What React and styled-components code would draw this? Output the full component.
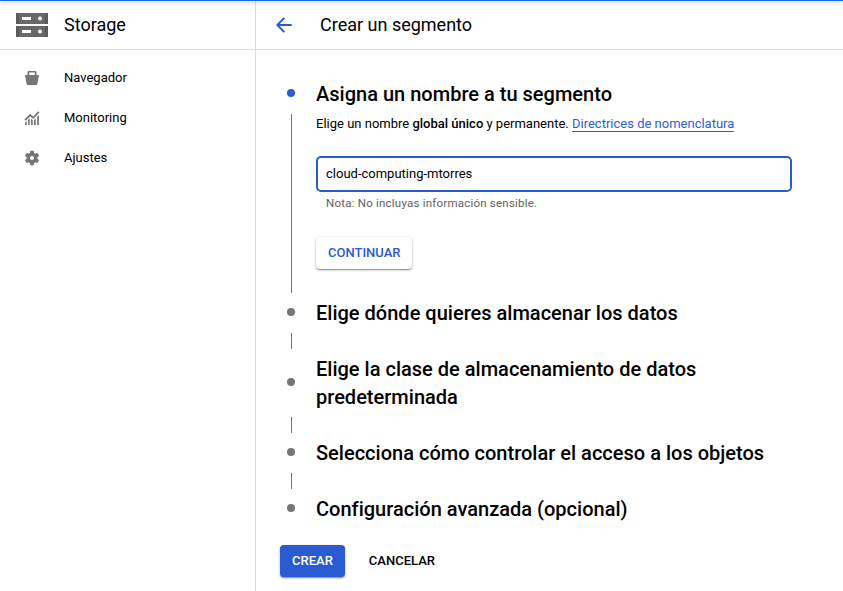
import React from "react";
import styled, { createGlobalStyle } from "styled-components";

const GlobalStyle = createGlobalStyle`
  *, *::before, *::after { box-sizing: border-box; }
  body { margin: 0; background: #fff; overflow: hidden; }
  button, input { font: inherit; letter-spacing: inherit; }
`;

const Page = styled.div`
  display: flex;
  flex-direction: column;
  height: 591px;
  color: #000;
  background: #fff;
  font: 400 13px/20px Roboto, "Liberation Sans", sans-serif;
`;

const TopBar = styled.div`
  position: relative;
  flex: none;
  height: 1px;
  background: #1a66e0;
  box-shadow: 0 1px 4px rgba(0, 0, 0, 0.5);
`;

const Columns = styled.div`
  flex: 1;
  display: grid;
  grid-template-columns: 256px 1fr;
`;

const Sidebar = styled.aside`
  border-right: 1px solid #dcdcdc;
`;

const Header = styled.header`
  display: flex;
  align-items: center;
  height: 49px;
  padding-left: ${(p) => p.$inset}px;
  gap: ${(p) => p.$gap}px;
  border-bottom: 1px solid #dcdcdc;
`;

const HeaderTitle = styled.h1`
  margin: 0;
  font-size: 18px;
  font-weight: 400;
  line-height: 24px;
`;

const Nav = styled.nav`
  padding-top: 8px;
`;

const NavItem = styled.a`
  display: flex;
  align-items: center;
  height: 40px;
  padding-left: 23px;
  gap: 23px;

  svg { flex: none; }
`;

const Content = styled.main`
  padding: 30px 51px 0 24px;
`;

const Step = styled.section`
  display: grid;
  grid-template-columns: 22px 1fr;
  column-gap: 14px;
`;

const Dot = styled.span`
  align-self: center;
  justify-self: center;
  width: 8px;
  height: 8px;
  margin-bottom: 2px;
  border-radius: 50%;
  background: ${(p) => (p.$active ? "#2a5bd3" : "#757575")};
`;

const StepTitle = styled.h2`
  margin: 0;
  font-size: 20px;
  font-weight: 500;
  line-height: 28px;
  letter-spacing: 0.01px;
`;

const Connector = styled.span`
  justify-self: center;
  width: 1px;
  min-height: 16px;
  margin: 6px 0 6px 1px;
  background: #757575;
`;

const StepBody = styled.div`
  height: 191px;
  padding-top: 6px;
`;

const Description = styled.p`
  margin: 0 0 22px;
  line-height: 20px;

  strong { font-weight: 500; }
`;

const Link = styled.a`
  color: #3160d4;
  border-bottom: 1px solid #3160d4;
`;

const NameInput = styled.input`
  display: block;
  width: 476px;
  height: 36px;
  padding: 0 8px 2px;
  border: 2px solid #2a5bd3;
  border-radius: 5px;
  outline: none;
  color: #000;
  background: #fff;
`;

const Hint = styled.p`
  margin: 3px 0 26px 10px;
  color: #616161;
  font-size: 11.5px;
  line-height: 16px;
  letter-spacing: 0.22px;
`;

const Button = styled.button`
  height: 32px;
  padding: 0 12px;
  border: 0;
  border-radius: 4px;
  font-weight: 500;
  color: ${(p) => (p.$kind === "primary" ? "#fff" : p.$kind === "raised" ? "#2a5bd3" : "#000")};
  background: ${(p) => (p.$kind === "primary" ? "#2a5bd3" : "#fff")};
  box-shadow: ${(p) =>
    p.$kind === "text" ? "none" : "0 1px 3px rgba(0, 0, 0, 0.25), 0 1px 1px rgba(0, 0, 0, 0.3)"};
`;

const Actions = styled.div`
  display: flex;
  gap: 12px;
  margin-top: 22px;
`;

const StorageLogo = () => (
  <svg width="32" height="26" viewBox="0 0 32 26">
    <path fill="#686868" d="M0 1h32v11H0zM0 14h32v11H0z" />
    <path fill="#5a5a5a" d="M0 1h3v11H0zM29 1h3v11h-3zM0 14h3v11H0zM29 14h3v11h-3z" />
    <path fill="#fff" d="M6 5h9v3H6zM6 18h9v3H6z" />
    <circle cx="24" cy="6.5" r="2" fill="#fff" />
    <circle cx="24" cy="19.5" r="2" fill="#fff" />
  </svg>
);

const BackArrow = () => (
  <svg width="16" height="16" viewBox="0 0 16 16" fill="none" stroke="#2a5bd3" strokeWidth="2">
    <path d="M15.7 8H1.8M8.3 .9 1.3 8l7 7.1" />
  </svg>
);

const BucketIcon = () => (
  <svg width="18" height="18" viewBox="0 0 18 18" fill="#757575">
    <path d="M2 6h2.5V3.2Q4.5 2 5.7 2h6.6q1.2 0 1.2 1.2V6H16l-1.6 8.8Q14.2 16 13 16H5q-1.200 0-1.400-1.200zM6.200 3.600V6h5.600V3.600z" fillRule="evenodd" />
  </svg>
);

const ChartIcon = () => (
  <svg width="18" height="18" viewBox="0 0 18 18">
    <path fill="none" stroke="#757575" strokeWidth="1.8" d="M2 11.200 7.200 6l3 2.800 5.600-6" />
    <path
      fill="#757575"
      d="M2 13.600l1.700-1.600V16H2zM5 11l1.700-1.700V16H5zM8 9.600l1.700 1.600V16H8zM11 11.200l1.700-1.800V16H11zM14.200 7.800l1.700-1.800V16h-1.700z"
    />
  </svg>
);

const GearIcon = () => (
  <svg width="18" height="18" viewBox="-.5 -.5 25 25" fill="#757575">
    <path d="M19.430 12.980c.04-.32.07-.64.07-.98s-.03-.66-.07-.98l2.110-1.650c.19-.15.24-.42.12-.64l-2-3.460c-.12-.22-.39-.3-.61-.22l-2.490 1c-.52-.4-1.080-.73-1.690-.98l-.38-2.650C14.460 2.180 14.250 2 14 2h-4c-.25 0-.46.18-.49.42l-.38 2.650c-.61.25-1.170.59-1.690.98l-2.490-1c-.23-.09-.49 0-.61.22l-2 3.460c-.13.22-.07.49.12.64l2.110 1.650c-.04.32-.07.65-.07.98s.03.66.07.98l-2.110 1.650c-.19.15-.24.42-.12.64l2 3.460c.12.22.39.3.61.22l2.490-1c.52.4 1.080.73 1.690.98l.38 2.650c.03.24.24.42.49.42h4c.25 0 .46-.18.49-.42l.38-2.650c.61-.25 1.170-.59 1.690-.98l2.490 1c.23.09.49 0 .61-.22l2-3.460c.12-.22.07-.49-.12-.64zM12 14.800a2.800 2.800 0 1 1 0-5.600 2.800 2.800 0 0 1 0 5.600z" />
  </svg>
);

const NAV = [
  { label: "Navegador", Icon: BucketIcon },
  { label: "Monitoring", Icon: ChartIcon },
  { label: "Ajustes", Icon: GearIcon },
];

const PENDING_STEPS = [
  "Elige dónde quieres almacenar los datos",
  "Elige la clase de almacenamiento de datos predeterminada",
  "Selecciona cómo controlar el acceso a los objetos",
  "Configuración avanzada (opcional)",
];

export default function App() {
  return (
    <Page>
      <GlobalStyle />
      <TopBar />
      <Columns>
        <Sidebar>
          <Header $inset={16} $gap={16}>
            <StorageLogo />
            <HeaderTitle>Storage</HeaderTitle>
          </Header>
          <Nav>
            {NAV.map(({ label, Icon }) => (
              <NavItem key={label}>
                <Icon />
                {label}
              </NavItem>
            ))}
          </Nav>
        </Sidebar>
        <div>
          <Header as="div" $inset={20} $gap={28}>
            <BackArrow />
            <HeaderTitle>Crear un segmento</HeaderTitle>
          </Header>
          <Content>
            <Step>
              <Dot $active />
              <StepTitle>Asigna un nombre a tu segmento</StepTitle>
              <Connector />
              <StepBody>
                <Description>
                  Elige un nombre <strong>global único</strong> y permanente.{" "}
                  <Link>Directrices de nomenclatura</Link>
                </Description>
                <NameInput defaultValue="cloud-computing-mtorres" />
                <Hint>Nota: No incluyas información sensible.</Hint>
                <Button $kind="raised">CONTINUAR</Button>
              </StepBody>
            </Step>
            {PENDING_STEPS.map((title, i) => (
              <Step key={title}>
                <Dot />
                <StepTitle>{title}</StepTitle>
                {i < PENDING_STEPS.length - 1 && <Connector />}
              </Step>
            ))}
            <Actions>
              <Button $kind="primary">CREAR</Button>
              <Button $kind="text">CANCELAR</Button>
            </Actions>
          </Content>
        </div>
      </Columns>
    </Page>
  );
}
